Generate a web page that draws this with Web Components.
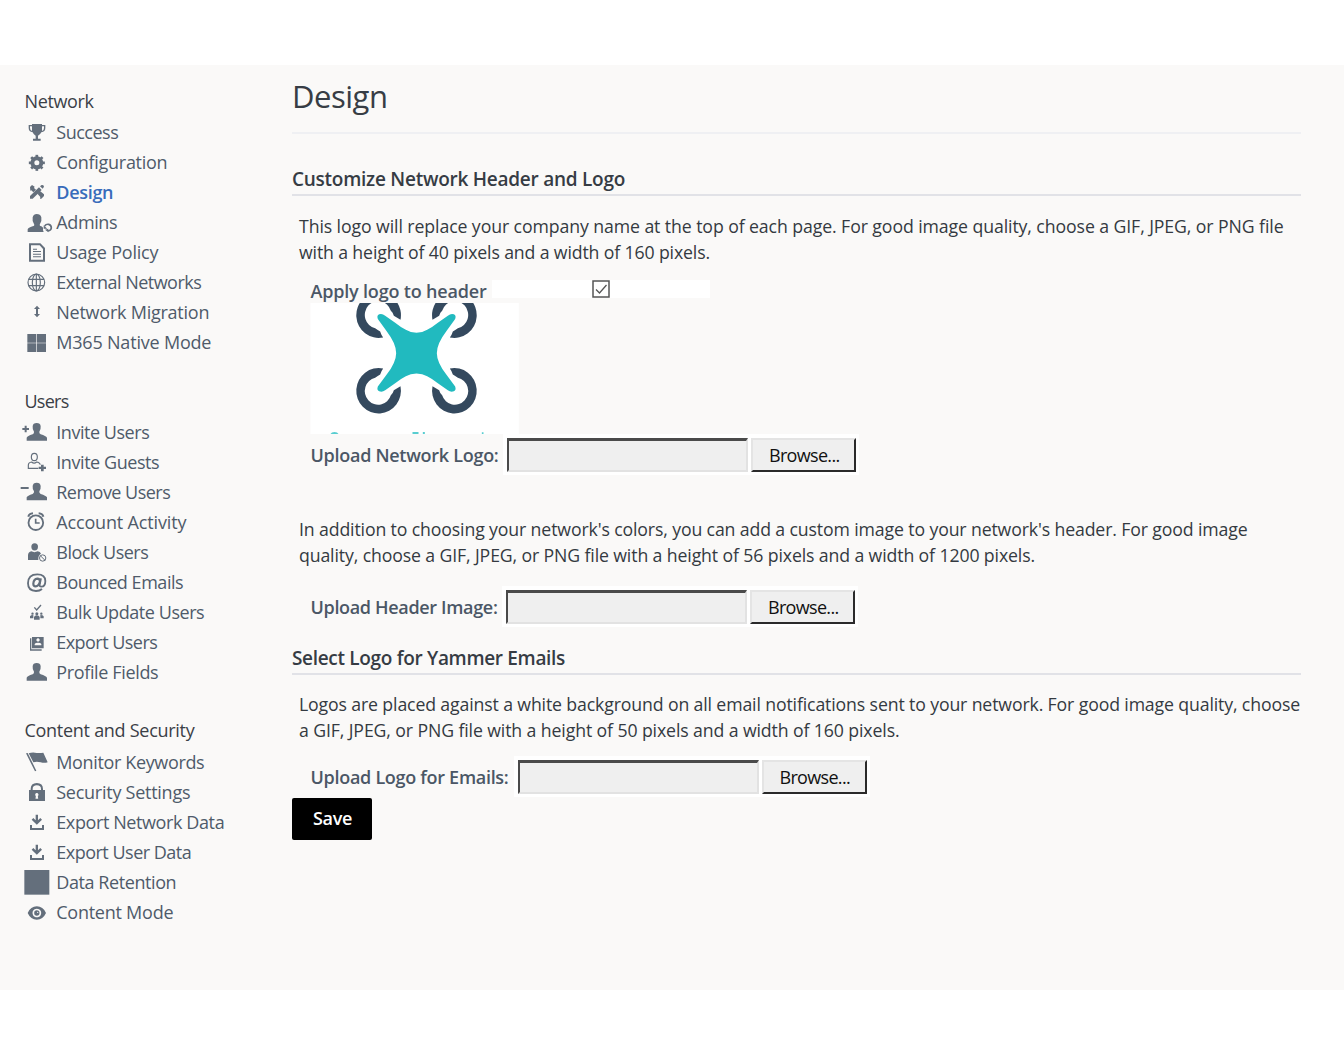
<!DOCTYPE html>
<html lang="en"><head><meta charset="utf-8"><title>Design</title>
<style>
body{margin:0;background:#fff;font-family:"Open Sans","Noto Sans",sans-serif;font-size:18px;color:#343a41}
</style></head><body>
<design-page></design-page>
<script>
// One line of text whose tracking is set so that it fills the width in "w".
class FitText extends HTMLElement{
  connectedCallback(){
    if(this.shadowRoot)return;
    this.attachShadow({mode:'open'}).innerHTML='<style>:host{display:block;white-space:nowrap}span{display:inline-block}</style><span></span>';
    const s=this.shadowRoot.querySelector('span'),w=+this.getAttribute('w')-1;
    s.textContent=this.getAttribute('text');
    const n=s.getBoundingClientRect().width;
    s.style.letterSpacing=((w-n)/s.textContent.length)+'px';
  }
}
customElements.define('fit-text',FitText);

const person='<path d="M80 167V158Q82 153 98 148Q103 145 102 140Q97 134 98 124Q99 114 110 114Q121 114 122 124Q123 134 118 140Q117 145 122 148Q138 153 141 158V167Z"/>';
const download='<path d="M107 299h7v17l7-7 5 5-15.500 15-15.500-15 5-5 7 7zM90 330h6v9h30v-9h6v15H90z"/>';
const ICONS={
 trophy:[111,'<path d="M96 132h30v3h10v9q0 11-12 13-4 8-10 10v9h8v6H99v-6h8v-9q-6-2-9-10-12-2-12-13v-9h10zM96 139h-6v5q0 7 6 9zM126 139v14q6-2 6-9v-5z" fill-rule="evenodd"/>'],
 gear:[201,'<g transform="translate(110.500 248.500)"><circle r="13.500" fill="none" stroke="currentColor" stroke-width="12"/><g><rect x="-4" y="-24" width="8" height="9"/><rect x="-4" y="15" width="8" height="9"/><rect x="-24" y="-4" width="9" height="8"/><rect x="15" y="-4" width="9" height="8"/></g><g transform="rotate(45)"><rect x="-4" y="-24" width="8" height="9"/><rect x="-4" y="15" width="8" height="9"/><rect x="-24" y="-4" width="9" height="8"/><rect x="15" y="-4" width="9" height="8"/></g></g>'],
 tools:[291,'<path d="M90 321l6-6 8 5-2 4 6 5-8 8-6-6-3 1zM113 342l8-8 11 9v5l-8 8h-4l1-5zM90 356v-8l27-26 8 8-27 26zM120 319l5-4q7-1 7 5l-4 6z"/>'],
 admin:[381,'<path d="M83 456v-8q1-5 15-9 7-2 4-7-6-9-4-20 3-10 12-10 11 0 14 10 2 12-4 20-3 5 4 7 4 2 5 4-1 6 2 13z"/><path d="M134 438Q138 432 146 433Q154 435 154 444Q153 452 144 453" fill="none" stroke="currentColor" stroke-width="5"/><path d="M131 436v10h11zM135 449l10-3v11z"/>'],
 doc:[6,'<path fill-rule="evenodd" d="M87 25h34l14 14v41H87zM93 31v43h36V42l-10-11z"/><path d="M99 41h12v3H99zM99 48h24v3H99zM99 56h24v3H99zM99 64h24v3H99z"/>'],
 globe:[96,'<g fill="none" stroke="currentColor" stroke-width="3.500"><circle cx="109" cy="142.500" r="25"/><ellipse cx="109" cy="142.500" rx="12" ry="25"/><path d="M109 117v51M86 133h46M86 152h46"/></g>'],
 updown:[186,'<path d="M111 212l9 10h-6v15h6l-9 10-9-10h6v-15h-6z"/>'],
 windows:[276,'<path d="M82 297h27v26H82zM111 297h27v26h-27zM82 325h27v26H82zM111 325h27v26h-27z"/>'],
 invite:[96,person+'<path d="M74 122h6v7h7v6h-7v7h-6v-7h-7v-6h7z"/>'],
 guest:[186,'<g fill="none" stroke="currentColor" stroke-width="3.500"><ellipse cx="103" cy="216" rx="9" ry="11"/><path d="M115 250H85v-9q0-9 10-10 7 7 15 0 9 1 11 8"/></g><path d="M123 239h8v6h7v7h-7v7h-8v-7h-7v-7h7z"/>'],
 remove:[276,'<g transform="translate(0 179)">'+person+'</g><path d="M62 306h24v6H62z"/>'],
 clock:[366,'<g fill="none" stroke="currentColor"><circle cx="107.500" cy="413" r="22" stroke-width="5.500"/><path d="M107 401v13h12" stroke-width="5"/><path d="M85 395q2-9 14-10M116 385q12 1 14 10" stroke-width="6"/></g>'],
 block:[6,'<ellipse cx="104" cy="35.500" rx="10" ry="11"/><path d="M84 75V60q1-9 10-11 9 5 19 0 8 1 10 7-9 4-8 19z"/><g fill="none" stroke="currentColor" stroke-width="3"><circle cx="128" cy="69" r="9.500"/><path d="M121 62l14 14"/></g>'],
 at:[96,'<g fill="none" stroke="currentColor"><path d="M126 162Q119 168 108 168Q84 168 84 145Q84 118 112 118Q136 118 136 138Q136 155 124 155Q118 155 119 149L123 130" stroke-width="5.500"/><path d="M120 140Q120 131 112 131Q101 132 100 146Q100 154 107 154Q116 154 120 140Z" stroke-width="6.500"/></g>'],
 bulk:[186,'<path d="M103 217l7 8 13-15" fill="none" stroke="currentColor" stroke-width="4"/><circle cx="97.500" cy="236" r="3.500"/><circle cx="110.500" cy="236.500" r="4.500"/><circle cx="124" cy="236" r="3.500"/><path d="M90 250v-6q2-4 10-4v10zM131 250v-6q-2-4-10-4v10zM102 254v-8q2-5 8.500-5t8.500 5v8z"/>'],
 card:[276,'<path fill-rule="evenodd" d="M96 306h35v34H96zM104 331h20v-4q-2-4-10-4t-10 4z M114 310a5 5 0 1 0 .1 0z"/><path d="M90 310h4v33h31v4H90z"/>'],
 profile:[366,'<g transform="translate(0 270)">'+person+'</g>'],
 flag:[96,'<path d="M78 115l5-1 26 53-4 2zM86 115q12-4 24-1 10 1 20-1l13 29q-10 3-21 0-12-3-22 0z"/>'],
 lock:[186,'<path fill-rule="evenodd" d="M87 225h5v-3q0-18 18.500-18t18.500 18v3h6v33H87zM98 225h25v-3q0-11-12.500-11T98 222zM110.500 234a5 5 0 0 0-3 9l-1 8h8l-1-8a5 5 0 0 0-3-9z"/>'],
 dl1:[276,download],
 dl2:[366,'<g transform="translate(0 90)">'+download+'</g>'],
 square:[456,'<path d="M73 465h75v74H73z"/>'],
 eye:[546,'<path fill-rule="evenodd" d="M83 594q9-20 27.500-20t27.500 20q-9 20-27.500 20T83 594zM110.500 581a13 13 0 1 0 .1 0z"/><circle cx="110.500" cy="594" r="8"/><circle cx="113" cy="592" r="2" fill="#faf9f8"/>']
};
class NavItem extends HTMLElement{
  connectedCallback(){
    const[y,art]=ICONS[this.getAttribute('icon')];
    this.attachShadow({mode:'open'}).innerHTML=`<style>:host{display:flex;height:30px;line-height:30px;color:#4f5b6a;padding-left:21px}
    svg{width:32px;height:30px;fill:currentColor;color:#646f7c;margin-right:3.250px;overflow:visible;flex:none}
    :host([active]){color:#386cbb;font-weight:600}</style>
    <svg viewBox="63 ${y} 96 90">${art}</svg><fit-text w="${this.getAttribute('w')}" text="${this.getAttribute('text')}"></fit-text>`;
  }
}
customElements.define('nav-item',NavItem);

class NavGroup extends HTMLElement{
  connectedCallback(){
    this.attachShadow({mode:'open'}).innerHTML=`<style>:host{display:block}header{padding-left:24.500px;height:var(--head,31px);line-height:30px;color:#3a4047}</style>
    <header><fit-text w="${this.getAttribute('w')}" text="${this.getAttribute('text')}"></fit-text></header><slot></slot>`;
  }
}
customElements.define('nav-group',NavGroup);

class SectionTitle extends HTMLElement{
  connectedCallback(){
    this.attachShadow({mode:'open'}).innerHTML=`<style>:host{display:block;box-sizing:border-box;height:32px;line-height:30px;font-size:19px;font-weight:600;border-bottom:2px solid #e1e2e7;color:#363c44}</style>
    <fit-text w="${this.getAttribute('w')}" text="${this.getAttribute('text')}"></fit-text>`;
  }
}
customElements.define('section-title',SectionTitle);

class UploadRow extends HTMLElement{
  connectedCallback(){
    this.attachShadow({mode:'open'}).innerHTML=`<style>:host{display:flex;height:41px;padding-left:18px}
    .l{padding-left:.5px;box-sizing:border-box;font-weight:600;color:#4b5766;line-height:43px;flex:none}
    .f{display:flex;gap:3px;background:#fff;padding:4px 3px 3px 4px;box-sizing:border-box;width:356px;height:41px}
    .i{box-sizing:border-box;width:241px;height:34px;background:#efefef;border:2px solid;border-color:#4a4a4a #e2e2e2 #e2e2e2 #4a4a4a;border-top-width:3px}
    .b{box-sizing:border-box;width:105px;height:34px;background:#efefef;border:2px solid;border-color:#e4e4e4 #2b2b2b #2b2b2b #e4e4e4;color:#111;line-height:30px;padding-left:16px}</style>
    <div class="l" style="width:${this.getAttribute('field')}px"><fit-text w="${this.getAttribute('w')}" text="${this.getAttribute('text')}"></fit-text></div>
    <div class="f"><div class="i"></div><div class="b"><fit-text w="71.500" text="Browse..."></fit-text></div></div>`;
  }
}
customElements.define('upload-row',UploadRow);

class DroneLogo extends HTMLElement{
  connectedCallback(){
    const ring=(t)=>`<g transform="${t}"><path d="M280 296Q274 304 271 314Q264 318 256 323.500A40 41 0 1 0 303 376Q309 372 312 361L332 349A67 68 0 1 1 280 296Z"/></g>`;
    this.attachShadow({mode:'open'}).innerHTML=`<style>:host{display:block;height:131px}svg{display:block;width:209px;height:131px}</style>
    <svg viewBox="60.500 100 627 392" preserveAspectRatio="none"><rect x="62" y="100" width="625" height="392" fill="#fff"/>
    <g fill="#34495e">${ring('')}${ring('matrix(-1 0 0 1 760 0)')}${ring('matrix(1 0 0 -1 0 499)')}${ring('matrix(-1 0 0 -1 760 499)')}</g>
    <path fill="#21babf" d="M264 148Q260 137 268 134Q277 131 286 138L316 159Q332 172 348 180Q362 189 380 189Q398 189 412 180Q428 172 444 159L474 138Q483 131 492 134Q500 137 496 148L470 184Q441 222 441 250Q441 277 470 315L496 350Q500 361 492 364Q483 368 474 361L444 340Q428 327 412 319Q398 311 380 311Q362 311 348 319Q332 327 316 340L286 361Q277 368 268 364Q260 361 264 350L290 315Q319 277 319 250Q319 222 290 184Z"/>
    <path fill="#58cdd0" d="M122 492q3-6 12-6t12 6zM368 486h18v6h-18zM399 486h6v6h-6zM576 487h5v5h-5z"/></svg>`;
  }
}
customElements.define('drone-logo',DroneLogo);

const nav=(items)=>items.map(([i,t,w,a])=>`<nav-item icon="${i}" text="${t}" w="${w}" ${a||''}></nav-item>`).join('');
class DesignPage extends HTMLElement{
  connectedCallback(){
    this.attachShadow({mode:'open'}).innerHTML=`<style>
    :host{display:flex;box-sizing:border-box;margin-top:65px;height:925px;background:#faf9f8;overflow:hidden}
    nav{width:292px;flex:none;padding-top:21px;box-sizing:border-box}
    nav-group+nav-group{margin-top:29px}nav-group:last-child{margin-top:28px;--head:32px}
    main{width:1009px;padding-top:9px}
    h1{margin:0;font-size:31px;font-weight:400;line-height:44px;height:58px;border-bottom:2px solid #eff0f3;color:#373d45}
    .p{padding-left:7px;line-height:26px;font-size:17.700px;height:52px}
    .apply{display:flex;height:23px;padding-left:18px}
    .apply .l{padding-left:.5px;box-sizing:border-box;width:182px;font-weight:600;color:#4b5766;line-height:23px}
    .strip{background:#fff;width:218px;height:18px;display:flex;justify-content:center}
    .strip svg{display:block;width:18px;height:18px}
    .save{width:80px;height:41.500px;box-sizing:border-box;background:#000;color:#fff;font-weight:600;border-radius:2px;line-height:40px;padding-left:21px}
    </style>
    <nav>
    <nav-group text="Network" w="70">${nav([['trophy','Success',63],['gear','Configuration',112],['tools','Design',58,'active'],['admin','Admins',62],['doc','Usage Policy',103],['globe','External Networks',146],['updown','Network Migration',154],['windows','M365 Native Mode',156]])}</nav-group>
    <nav-group text="Users" w="45">${nav([['invite','Invite Users',94],['guest','Invite Guests',104],['remove','Remove Users',115],['clock','Account Activity',131],['block','Block Users',93],['at','Bounced Emails',128],['bulk','Bulk Update Users',149],['card','Export Users',102],['profile','Profile Fields',103]])}</nav-group>
    <nav-group text="Content and Security" w="171">${nav([['flag','Monitor Keywords',149],['lock','Security Settings',135],['dl1','Export Network Data',169],['dl2','Export User Data',136],['square','Data Retention',121],['eye','Content Mode',118]])}</nav-group>
    </nav>
    <main>
    <h1><fit-text w="96.500" text="Design"></fit-text></h1>
    <section-title style="margin-top:30px" w="334" text="Customize Network Header and Logo"></section-title>
    <div class="p" style="margin-top:17px"><fit-text w="985.500" text="This logo will replace your company name at the top of each page. For good image quality, choose a GIF, JPEG, or PNG file"></fit-text><fit-text w="412" text="with a height of 40 pixels and a width of 160 pixels."></fit-text></div>
    <div class="apply" style="margin-top:15px"><div class="l"><fit-text w="177" text="Apply logo to header"></fit-text></div><div class="strip"><svg viewBox="0 0 18 18" fill="none" stroke="#555"><rect x="1" y="1" width="16" height="16" stroke-width="1.500"/><path d="M4 9.500l3.500 3.500 7-8" stroke-width="1.300"/></svg></div></div>
    <drone-logo style="padding-left:18px"></drone-logo>
    <upload-row w="189" field="193" text="Upload Network Logo:"></upload-row>
    <div class="p" style="margin-top:41px"><fit-text w="949.500" text="In addition to choosing your network's colors, you can add a custom image to your network's header. For good image"></fit-text><fit-text w="737" text="quality, choose a GIF, JPEG, or PNG file with a height of 56 pixels and a width of 1200 pixels."></fit-text></div>
    <upload-row style="margin-top:18px" w="188" field="192" text="Upload Header Image:"></upload-row>
    <section-title style="margin-top:16px" w="274" text="Select Logo for Yammer Emails"></section-title>
    <div class="p" style="margin-top:16px"><fit-text w="1002" text="Logos are placed against a white background on all email notifications sent to your network. For good image quality, choose"></fit-text><fit-text w="601.500" text="a GIF, JPEG, or PNG file with a height of 50 pixels and a width of 160 pixels."></fit-text></div>
    <upload-row style="margin-top:13px" w="199" field="203.500" text="Upload Logo for Emails:"></upload-row>
    <div class="save" style="margin-top:1px"><fit-text w="40" text="Save"></fit-text></div>
    </main>`;
  }
}
customElements.define('design-page',DesignPage);
</script></body></html>
